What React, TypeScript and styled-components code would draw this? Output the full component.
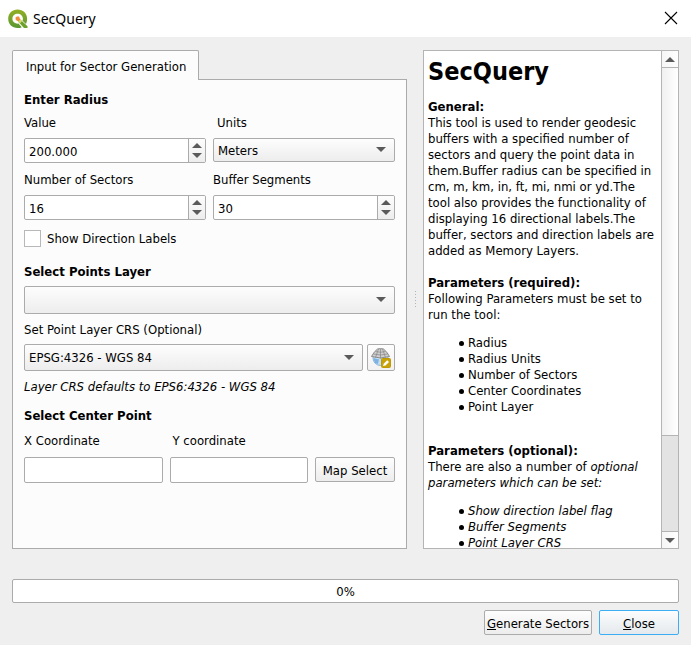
import React, { useRef, useState } from "react";
import styled, { createGlobalStyle } from "styled-components";

const uiFont = `"DejaVu Sans Condensed", "DejaVu Sans", sans-serif`;
const line = "#ababab";
const face = "linear-gradient(#fdfdfd, #ededed)";

const GlobalStyle = createGlobalStyle`
  *, *::before, *::after { box-sizing: border-box; }
  body { margin: 0; background: #efefef; }
  body, button, input, select { font-family: ${uiFont}; font-size: 13px; line-height: 16px; color: #000; }
`;

const Dialog = styled.div`
  display: flex;
  flex-direction: column;
  height: 100vh;
  min-height: 600px;
`;

const TitleBar = styled.header`
  display: flex;
  align-items: center;
  gap: 5px;
  height: 37px;
  flex: none;
  padding: 0 13px 0 8px;
  background: #fff;
`;

const WindowTitle = styled.span`
  flex: 1;
  font-family: "Noto Sans", sans-serif;
  font-size: 14px;
`;

const CloseIcon = styled.button`
  display: flex;
  padding: 0 0 2px;
  border: 0;
  background: none;
`;

const Body = styled.main`
  flex: 1;
  min-height: 0;
  display: flex;
  flex-direction: column;
  padding: 13px 12px 10px;
`;

const Split = styled.div`
  flex: 1;
  min-height: 0;
  display: grid;
  grid-template-columns: 395fr 16px 256fr;
`;

const Handle = styled.div`
  align-self: center;
  justify-self: center;
  width: 1px;
  height: 17px;
  background: repeating-linear-gradient(#b4b4b4 0 1px, transparent 1px 3px);
`;

const Tabs = styled.section`
  display: flex;
  flex-direction: column;
  min-width: 0;
`;

const Tab = styled.button`
  align-self: flex-start;
  height: 30px;
  margin-bottom: -1px;
  z-index: 1;
  padding: 2px 12px 0 13px;
  border: 1px solid ${line};
  border-bottom: 0;
  border-radius: 2px 2px 0 0;
  background: #fcfcfc;
`;

const Pane = styled.form`
  flex: 1;
  display: flex;
  flex-direction: column;
  padding: 11px 11px 0;
  border: 1px solid ${line};
  background: #fcfcfc;
`;

const Heading = styled.h2<{ $before?: number; $after?: number }>`
  height: 16px;
  margin: ${(p) => p.$before ?? 0}px 0 ${(p) => p.$after ?? 7}px;
  font-size: 13px;
  line-height: 18px;
`;

const Columns = styled.div<{ $cols: string; $gap?: string }>`
  display: grid;
  grid-template-columns: ${(p) => p.$cols};
  align-items: start;
  gap: ${(p) => p.$gap ?? "8px 7px"};
`;

const Label = styled.label<{ $indent?: number }>`
  height: 16px;
  padding-left: ${(p) => p.$indent ?? 0}px;
  line-height: 18px;
`;

const Note = styled.em`
  height: 16px;
  line-height: 18px;
`;

const Stack = styled.div`
  display: flex;
  flex-direction: column;
  gap: 7px;
`;

const Spin = styled.div`
  display: flex;
  height: 25px;
  border: 1px solid ${line};
  border-radius: 2px;
  background: #fff;
  overflow: hidden;
`;

const SpinInput = styled.input`
  flex: 1;
  min-width: 0;
  padding: 2px 4px 0;
  border: 0;
  outline: 0;
  background: none;
`;

const SpinButtons = styled.div`
  display: flex;
  flex-direction: column;
  width: 17px;
  border-left: 1px solid ${line};
  background: ${face};
`;

const ArrowButton = styled.button<{ $end: boolean }>`
  flex: 1;
  display: flex;
  justify-content: center;
  align-items: ${(p) => (p.$end ? "flex-end" : "flex-start")};
  padding: ${(p) => (p.$end ? "0 0 4px" : "4px 0 0")};
  border: 0;
  background: none;
`;

const Combo = styled.div<{ $height: number }>`
  position: relative;
  height: ${(p) => p.$height}px;

  svg {
    position: absolute;
    right: 9px;
    top: 50%;
    margin-top: -3px;
    pointer-events: none;
  }
`;

const Select = styled.select`
  appearance: none;
  width: 100%;
  height: 100%;
  padding: 1px 24px 0 4px;
  border: 1px solid ${line};
  border-radius: 2px;
  background: ${face};
`;

const TextInput = styled.input`
  min-width: 0;
  width: 100%;
  height: 26px;
  border: 1px solid ${line};
  border-radius: 2px;
  background: #fff;
`;

const Button = styled.button<{ $width: number; $focus?: boolean }>`
  min-width: ${(p) => p.$width}px;
  height: 25px;
  padding: 2px 2px 0;
  border: 1px solid ${(p) => (p.$focus ? "#3daef5" : line)};
  border-radius: 2px;
  background: ${(p) => (p.$focus ? "linear-gradient(#fcfdfd, #e4e9ed)" : face)};
  white-space: nowrap;
`;

const IconButton = styled.button`
  display: flex;
  align-items: center;
  justify-content: center;
  height: 27px;
  padding: 0;
  border: 1px solid ${line};
  border-radius: 2px;
  background: linear-gradient(#fdfdfd, #f2f2f2);
`;

const CheckRow = styled.label`
  display: flex;
  align-items: center;
  gap: 6px;
  margin-top: 10px;
  height: 17px;
  line-height: 17px;
`;

const CheckBox = styled.input`
  appearance: none;
  width: 17px;
  height: 17px;
  margin: 0;
  border: 1px solid #b8b8b8;
  background: #fff;
  &:checked { box-shadow: inset 0 0 0 3px #fff; background: #555; }
`;

const HelpFrame = styled.section`
  display: grid;
  grid-template-columns: 1fr 17px;
  min-width: 0;
  min-height: 0;
  border: 1px solid #b4b4b4;
  background: #fff;
`;

const HelpText = styled.article`
  min-height: 0;
  overflow: hidden;
  padding: 5px 4px 0;

  h1 { margin: 0 0 11px; font-size: 25px; line-height: 32px; }
  h2 { margin: 0; font-size: 13px; line-height: 16px; }
  p { margin: 0; }
  p + h2 { margin-top: 16px; }
  ul + h2 { margin-top: 28px; }
  ul { margin: 12px 0 0; padding: 0; list-style: none; }
  li { display: flex; align-items: center; gap: 4px; padding-left: 31px; }
  li::before { content: ""; width: 5px; height: 5px; border-radius: 50%; background: #000; }
`;

const ScrollBar = styled.div`
  display: flex;
  flex-direction: column;
  border-left: 1px solid #b4b4b4;
  background: #e3e3e3;
`;

const ScrollButton = styled.button<{ $edge: "top" | "bottom" }>`
  display: flex;
  align-items: center;
  justify-content: center;
  height: 17px;
  padding: 0;
  border: 0 solid #b4b4b4;
  border-${(p) => p.$edge}-width: 1px;
  background: linear-gradient(90deg, #f6f6f6, #fff);
`;

const Track = styled.div`
  flex: 1;
`;

const Thumb = styled.div`
  height: 79.4%;
  border-bottom: 1px solid #b4b4b4;
  background: linear-gradient(90deg, #f0f0f0, #fff);
`;

const Progress = styled.div`
  display: flex;
  align-items: center;
  justify-content: center;
  flex: none;
  height: 24px;
  margin-top: 30px;
  padding-top: 1px;
  border: 1px solid ${line};
  border-radius: 2px;
  background: #fff;
`;

const Actions = styled.footer`
  display: flex;
  justify-content: flex-end;
  gap: 7px;
  margin-top: 7px;
`;

function Arrow({ up }: { up?: boolean }) {
  return (
    <svg width="10" height="5" viewBox="0 0 10 5" aria-hidden="true">
      <path d={up ? "M0 5L5 0L10 5Z" : "M0 0H10L5 5Z"} fill="#5a5a5a" />
    </svg>
  );
}

function QgisLogo() {
  return (
    <svg width="20" height="20" viewBox="0 0 20 20" aria-hidden="true">
      <defs>
        <linearGradient id="leaf" x1="0" y1="0" x2="0" y2="1">
          <stop offset="0" stopColor="#93b023" />
          <stop offset="1" stopColor="#589632" />
        </linearGradient>
      </defs>
      <path
        d="M9.6 .5C4.2.5.2 4.4.2 9.8s4 9.3 9.4 9.3c1.600 0 3-.3 4.200-.9l-3.400-3.600c-3.400.3-6-1.700-6-4.800 0-3 2.200-5 5.200-5s5.300 2.100 5.300 5c0 .8-.1 1.400-.4 2l3.500 3.200c.7-1.400 1.100-3.100 1.100-5.200C19.100 4.400 15 .5 9.600.5Z"
        fill="url(#leaf)"
      />
      <path d="M12.300 10.600L19.500 17.200V19H16L10.300 12.800V10.600Z" fill="#6ea12c" />
      <path d="M12 10.200L14 12.200L12 14.200L10 12.200Z" fill="#d9dc6a" />
      <path d="M7.500 8.500L9 7.500H11L12.300 10.400L10.200 12.300L7.800 11Z" fill="#f08a3c" />
    </svg>
  );
}

function CrsIcon() {
  return (
    <svg width="20" height="20" viewBox="0 0 20 20" aria-hidden="true">
      <circle cx="9.500" cy="10" r="7.500" fill="#c2e0f7" stroke="#8db4d8" />
      <path d="M2.500 10.500C4 9.500 6 12 8 11L7 16L4 15ZM11 11H16L14 13H11Z" fill="#7fb2e2" />
      <path d="M6.500 1Q9.500 .2 12.500 1Q16 3.500 18.500 8.500Q9.500 11.500 .5 8.500Q3 3.500 6.500 1Z" fill="#cfcfcf" stroke="#8a8a8a" />
      <path
        d="M9.500 1V10.500M7.500 1L4.500 9.500M11.500 1L14.500 9.500M4.500 3.500Q9.500 5 14.500 3.500M2.500 6Q9.500 8 16.500 6"
        fill="none"
        stroke="#858585"
        strokeWidth=".7"
      />
      <rect x="10.500" y="10.500" width="9" height="9" rx="1" fill="#c9a208" stroke="#c09a05" />
      <path d="M12 18L12.700 15.700L16.200 12.200L18 14L14.500 17.400Z" fill="#fff" />
    </svg>
  );
}

type SpinBoxProps = { id: string; initial: number; digits?: number };

function SpinBox({ id, initial, digits = 0 }: SpinBoxProps) {
  const [text, setText] = useState(initial.toFixed(digits));
  const step = (by: number) => setText(((parseFloat(text) || 0) + by).toFixed(digits));
  return (
    <Spin>
      <SpinInput id={id} inputMode="decimal" value={text} onChange={(e) => setText(e.target.value)} />
      <SpinButtons>
        <ArrowButton type="button" $end={false} aria-label="Increase" onClick={() => step(1)}>
          <Arrow up />
        </ArrowButton>
        <ArrowButton type="button" $end aria-label="Decrease" onClick={() => step(-1)}>
          <Arrow />
        </ArrowButton>
      </SpinButtons>
    </Spin>
  );
}

type ComboBoxProps = { id: string; height: number; options: string[]; label?: string };

function ComboBox({ id, height, options, label }: ComboBoxProps) {
  return (
    <Combo $height={height}>
      <Select id={id} aria-label={label}>
        {options.map((o) => (
          <option key={o}>{o}</option>
        ))}
      </Select>
      <Arrow />
    </Combo>
  );
}

const required = ["Radius", "Radius Units", "Number of Sectors", "Center Coordinates", "Point Layer"];
const optional = ["Show direction label flag", "Buffer Segments", "Point Layer CRS"];

function Help() {
  const text = useRef<HTMLElement>(null);
  const scroll = (by: number) => text.current?.scrollBy({ top: by });
  return (
    <HelpFrame>
      <HelpText ref={text}>
        <h1>SecQuery</h1>
        <h2>General:</h2>
        <p>
          This tool is used to render geodesic buffers with a specified number of sectors and query the point data in
          them.Buffer radius can be specified in cm, m, km, in, ft, mi, nmi or yd.The tool also provides the
          functionality of displaying 16 directional labels.The buffer, sectors and direction labels are added as
          Memory Layers.
        </p>
        <h2>Parameters (required):</h2>
        <p>Following Parameters must be set to run the tool:</p>
        <ul>
          {required.map((r) => (
            <li key={r}>{r}</li>
          ))}
        </ul>
        <h2>Parameters (optional):</h2>
        <p>
          There are also a number of <em>optional parameters which can be set:</em>
        </p>
        <ul>
          {optional.map((o) => (
            <li key={o}>
              <em>{o}</em>
            </li>
          ))}
        </ul>
      </HelpText>
      <ScrollBar>
        <ScrollButton $edge="bottom" aria-label="Scroll up" onClick={() => scroll(-16)}>
          <Arrow up />
        </ScrollButton>
        <Track>
          <Thumb />
        </Track>
        <ScrollButton $edge="top" aria-label="Scroll down" onClick={() => scroll(16)}>
          <Arrow />
        </ScrollButton>
      </ScrollBar>
    </HelpFrame>
  );
}

export default function App() {
  return (
    <Dialog>
      <GlobalStyle />
      <TitleBar>
        <QgisLogo />
        <WindowTitle>SecQuery</WindowTitle>
        <CloseIcon aria-label="Close window">
          <svg width="14" height="14" viewBox="0 0 14 14" aria-hidden="true">
            <path d="M1 1L13 13M13 1L1 13" stroke="#000" strokeWidth="1.100" />
          </svg>
        </CloseIcon>
      </TitleBar>
      <Body>
        <Split>
          <Tabs>
            <Tab type="button">Input for Sector Generation</Tab>
            <Pane onSubmit={(e) => e.preventDefault()}>
              <Heading>Enter Radius</Heading>
              <Columns $cols="1fr 1fr">
                <Label htmlFor="radius">Value</Label>
                <Label htmlFor="units" $indent={4}>Units</Label>
                <SpinBox id="radius" initial={200} digits={3} />
                <ComboBox id="units" height={24} options={["Meters", "Kilometers", "Feet", "Miles"]} />
                <Label htmlFor="sectors">Number of Sectors</Label>
                <Label htmlFor="segments">Buffer Segments</Label>
                <SpinBox id="sectors" initial={16} />
                <SpinBox id="segments" initial={30} />
              </Columns>
              <CheckRow>
                <CheckBox type="checkbox" />
                Show Direction Labels
              </CheckRow>
              <Heading $before={16}>Select Points Layer</Heading>
              <Stack>
                <ComboBox id="layer" height={28} options={[""]} label="Points layer" />
                <Label htmlFor="crs">Set Point Layer CRS (Optional)</Label>
                <Columns $cols="1fr 28px" $gap="4px">
                  <ComboBox id="crs" height={27} options={["EPSG:4326 - WGS 84"]} />
                  <IconButton type="button" aria-label="Select CRS">
                    <CrsIcon />
                  </IconButton>
                </Columns>
                <Note>Layer CRS defaults to EPS6:4326 - WGS 84</Note>
              </Stack>
              <Heading $before={13} $after={9}>Select Center Point</Heading>
              <Columns $cols="1fr 1fr 80px" $gap="9px 7px">
                <Label htmlFor="x">X Coordinate</Label>
                <Label htmlFor="y" $indent={3}>Y coordinate</Label>
                <span />
                <TextInput id="x" />
                <TextInput id="y" />
                <Button type="button" $width={80}>Map Select</Button>
              </Columns>
            </Pane>
          </Tabs>
          <Handle />
          <Help />
        </Split>
        <Progress role="progressbar" aria-valuenow={0}>0%</Progress>
        <Actions>
          <Button $width={108}>
            <u>G</u>enerate Sectors
          </Button>
          <Button $width={80} $focus>
            <u>C</u>lose
          </Button>
        </Actions>
      </Body>
    </Dialog>
  );
}
